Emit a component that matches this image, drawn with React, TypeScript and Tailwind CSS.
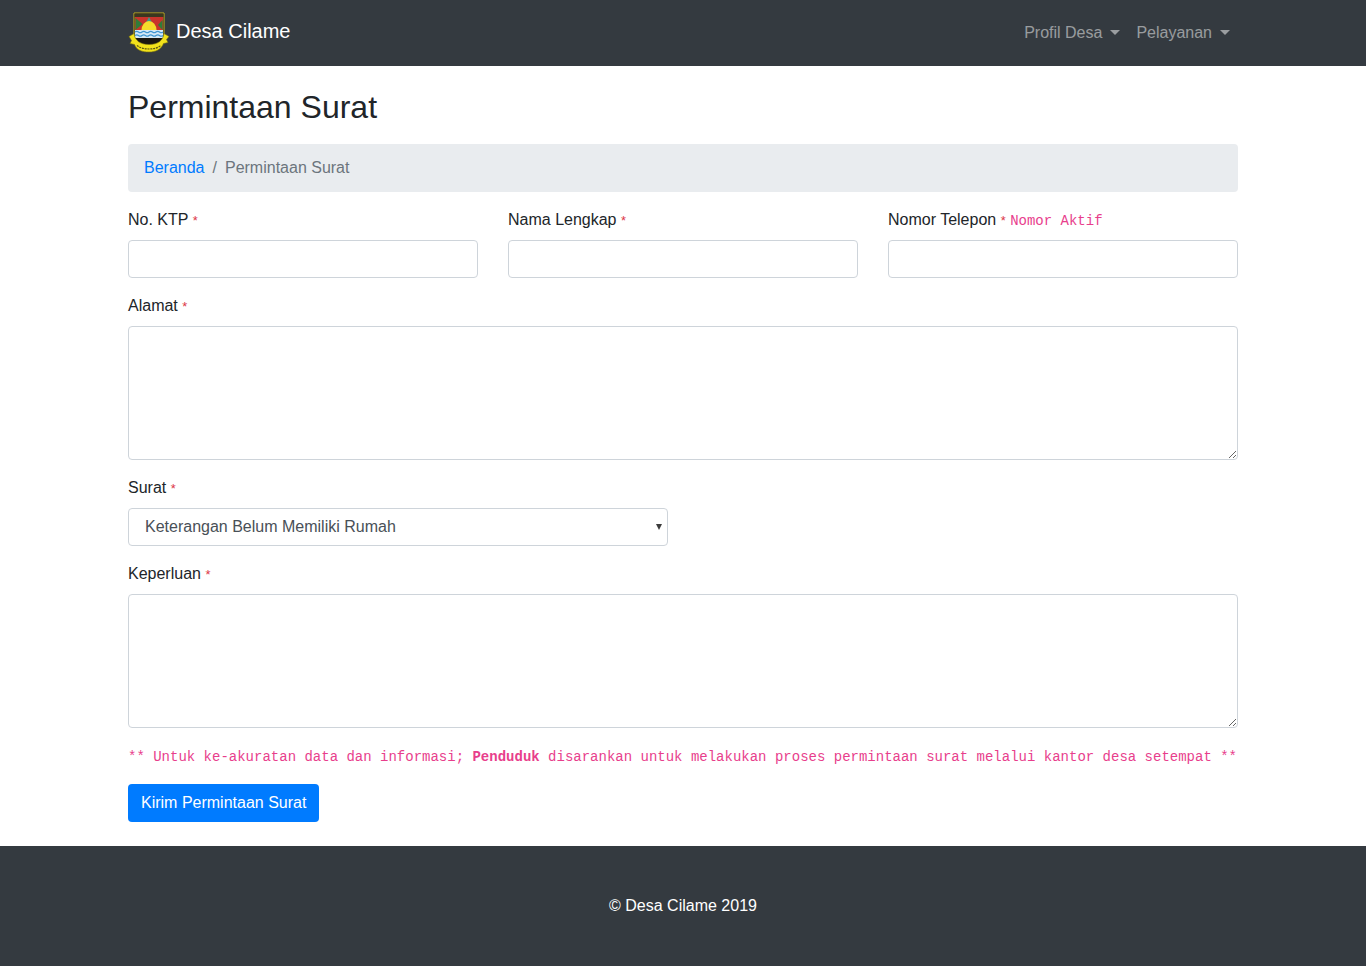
import React from "react";

const sans = "font-['Liberation_Sans',Arial,sans-serif]";

function Logo() {
  return (
    <svg width="42" height="42" viewBox="0 0 42 42" className="shrink-0">
      {/* shield */}
      <path d="M6 1h30v21c0 6-3 10-7 12H13c-4-2-7-6-7-12z" fill="#1a1712" stroke="#c9b51e" strokeWidth="1" />
      <rect x="6.500" y="1.500" width="29" height="3.500" fill="#3a3720" />
      <path d="M7 5h28v13H7z" fill="#c8342c" />
      <path d="M21 5l-7 13h14z" fill="#3f9a8c" />
      <path d="M7.500 6l7 6-7 6z" fill="#2f7d3a" />
      <path d="M34.500 8l-4.500 5 4.500 5z" fill="#2f7d3a" />
      <path d="M13.500 18a7.500 9 0 0 1 15 0z" fill="#f5dc2a" />
      {/* water */}
      <rect x="7" y="18" width="28" height="8" fill="#d5e9f6" />
      <path d="M7 20q1.750-1.400 3.500 0t3.500 0 3.500 0 3.500 0 3.500 0 3.500 0 3.500 0 3.500 0M7 23.500q1.750-1.400 3.500 0t3.500 0 3.500 0 3.500 0 3.500 0 3.500 0 3.500 0 3.500 0" fill="none" stroke="#3f95d2" strokeWidth="1.300" />
      {/* ribbon */}
      <path d="M1 24.500l5-3c1 7 6 11 15 11s14-4 15-11l5 3-2.500 3 1.500 3-4.500 1c-2 6-8 8.500-14.500 8.500S8.500 38.500 6.500 32.500l-4.500-1 1.500-3z" fill="#f2e21b" stroke="#77700f" strokeWidth="0.600" />
      <path d="M9 33.500c3 2.500 7.500 3.500 12 3.500s9-1 12-3.500" fill="none" stroke="#5b5610" strokeWidth="1.200" strokeDasharray="2 0.800" />
    </svg>
  );
}

function Caret() {
  return <span className="inline-block ml-[8px] align-[3px] w-0 h-0 border-t-[5px] border-x-[5px] border-b-0 border-t-current border-x-transparent" />;
}

function Label({ children, note }: { children: React.ReactNode; note?: string }) {
  return (
    <label className="block mb-2 h-6 leading-6">
      {children} <small className="text-[12.8px] text-[#dc3545]">*</small>
      {note && <code className="ml-[4.500px] text-[14px] text-[#e83e8c] font-['Liberation_Mono',monospace]">{note}</code>}
    </label>
  );
}

const control = "block w-full border border-[#ced4da] rounded bg-white text-[#495057] outline-none";

export default function App() {
  return (
    <div className={`${sans} text-[16px] leading-6 text-[#212529] bg-white min-h-[966px]`}>
      <nav className="bg-[#343a40] h-[66px]">
        <div className="w-[1110px] mx-auto h-full flex items-center justify-between">
          <a href="#" className="flex items-center gap-1.5 text-white text-[20px] leading-[30px]">
            <Logo />
            <span className="pb-1">Desa Cilame</span>
          </a>
          <ul className="flex text-white/50">
            <li className="px-2 py-2">Profil Desa<Caret /></li>
            <li className="px-2 py-2">Pelayanan<Caret /></li>
          </ul>
        </div>
      </nav>

      <main className="w-[1110px] mx-auto pb-6">
        <h1 className="text-[32px] leading-[38px] pt-[22px] mb-[18px]">Permintaan Surat</h1>
        <ol className="flex bg-[#e9ecef] rounded px-4 py-3 mb-4">
          <li><a href="#" className="text-[#007bff]">Beranda</a></li>
          <li className="text-[#6c757d]"><span className="px-2">/</span>Permintaan Surat</li>
        </ol>

        <form>
          <div className="grid grid-cols-3 gap-x-[30px] mb-4">
            <div>
              <Label>No. KTP</Label>
              <input className={`${control} h-[38px] px-3`} />
            </div>
            <div>
              <Label>Nama Lengkap</Label>
              <input className={`${control} h-[38px] px-3`} />
            </div>
            <div>
              <Label note="Nomor Aktif">Nomor Telepon</Label>
              <input className={`${control} h-[38px] px-3`} />
            </div>
          </div>

          <div className="mb-4">
            <Label>Alamat</Label>
            <textarea rows={5} className={`${control} h-[134px] px-3 py-1.5`} />
          </div>

          <div className="mb-4 w-[540px]">
            <Label>Surat</Label>
            <div className="relative">
              <select defaultValue="rumah" className={`${control} appearance-none h-[38px] pl-4 pr-6`}>
                <option value="rumah">Keterangan Belum Memiliki Rumah</option>
              </select>
              <span className="absolute right-[6px] top-[16px] w-0 h-0 border-t-[6px] border-x-[3px] border-b-0 border-t-[#3c3c3c] border-x-transparent" />
            </div>
          </div>

          <div className="mb-4">
            <Label>Keperluan</Label>
            <textarea rows={5} className={`${control} h-[134px] px-3 py-1.5`} />
          </div>

          <p className="mb-4 h-6 whitespace-nowrap">
            <code className="text-[14px] text-[#e83e8c] font-['Liberation_Mono',monospace]">
              ** Untuk ke-akuratan data dan informasi; <b>Penduduk</b> disarankan untuk melakukan proses permintaan surat melalui kantor desa setempat **
            </code>
          </p>

          <button type="button" className="block h-[38px] px-[13px] rounded bg-[#007bff] text-white">Kirim Permintaan Surat</button>
        </form>
      </main>

      <footer className="bg-[#343a40] h-[120px] flex items-center justify-center text-white">
        © Desa Cilame 2019
      </footer>
    </div>
  );
}
